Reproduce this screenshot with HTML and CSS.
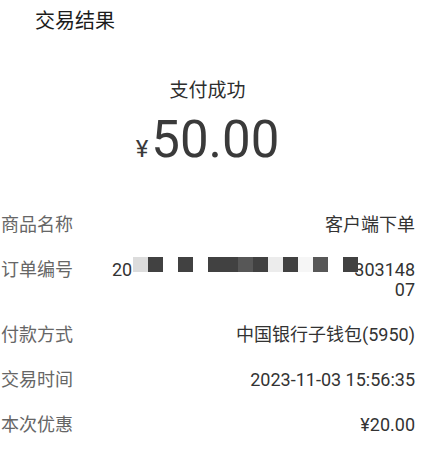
FILE: index.html
```html
<!DOCTYPE html>
<html lang="zh-CN">
<head>
  <meta charset="UTF-8" />
  <meta name="viewport" content="width=device-width, initial-scale=1.0"/>
  <title>交易结果</title>
  <link rel="stylesheet" href="styles.css">
</head>
<body>

  <div class="page">
    <header class="title">交易结果</header>

    <section class="result">
      <div class="status">支付成功</div>
      <div class="amount"><span class="currency">¥</span>50.00</div>
    </section>

    <section class="details">
      <div class="row">
        <span class="label">商品名称</span>
        <span class="value">客户端下单</span>
      </div>

      <div class="row">
        <span class="label label-order">订单编号</span>
        <div class="value order">
          <div class="order-line">
            <span>20</span>
            <span class="mosaic">
              <i class="px light"></i>
              <i class="px dark"></i>
              <i class="px blank"></i>
              <i class="px dark"></i>
              <i class="px blank"></i>
              <i class="px dark"></i>
              <i class="px dark"></i>
              <i class="px mid"></i>
              <i class="px dark"></i>
              <i class="px pale"></i>
              <i class="px dark"></i>
              <i class="px faint"></i>
              <i class="px mid"></i>
              <i class="px blank"></i>
              <i class="px dark"></i>
            </span>
            <span class="tail">303148</span>
          </div>
          <div>07</div>
        </div>
      </div>

      <div class="row">
        <span class="label">付款方式</span>
        <span class="value">中国银行子钱包(5950)</span>
      </div>

      <div class="row">
        <span class="label">交易时间</span>
        <span class="value">2023-11-03 15:56:35</span>
      </div>

      <div class="row">
        <span class="label">本次优惠</span>
        <span class="value">¥20.00</span>
      </div>
    </section>
  </div>

</body>
</html>
```

FILE: styles.css
```css
* {
  box-sizing: border-box;
  margin: 0;
  padding: 0;
  font-family: Roboto, 'Noto Sans CJK SC', sans-serif;
}

body {
  background-color: #fff;
  color: #333;
}

.page {
  width: 415px;
}

.title {
  font-size: 20px;
  line-height: 24px;
  color: #1c1c1c;
  padding: 9px 0 0 35px;
}

.result {
  text-align: center;
  margin-top: 46px;
}

.status {
  font-size: 19px;
  line-height: 24px;
  color: #2e2e2e;
}

.amount {
  font-size: 51px;
  line-height: 51px;
  color: #3a3a3a;
  margin-top: 11px;
}

.currency {
  font-size: 24px;
  margin-right: 3px;
}

.details {
  margin-top: 40px;
  display: flex;
  flex-direction: column;
  gap: 25px;
}

.row {
  display: flex;
  justify-content: space-between;
  align-items: flex-start;
  font-size: 18px;
  line-height: 20px;
}

.label {
  color: #666;
  padding-left: 1px;
}

.label-order {
  flex: 0 0 112px;
}

.value {
  color: #333;
  text-align: right;
}

.order {
  flex: 1;
}

.order-line {
  display: flex;
  align-items: flex-start;
}

.mosaic {
  position: relative;
  z-index: 1;
  display: flex;
  margin: -3px -4px 0 1px;
}

.px {
  width: 15px;
  height: 15px;
}

.px.dark { background-color: #414141; }
.px.mid { background-color: #575757; }
.px.light { background-color: #dcdcdc; }
.px.pale { background-color: #ececec; }
.px.faint { background-color: #f6f6f6; }
.px.blank { background-color: #fff; }

.tail {
  margin-left: auto;
}
```
